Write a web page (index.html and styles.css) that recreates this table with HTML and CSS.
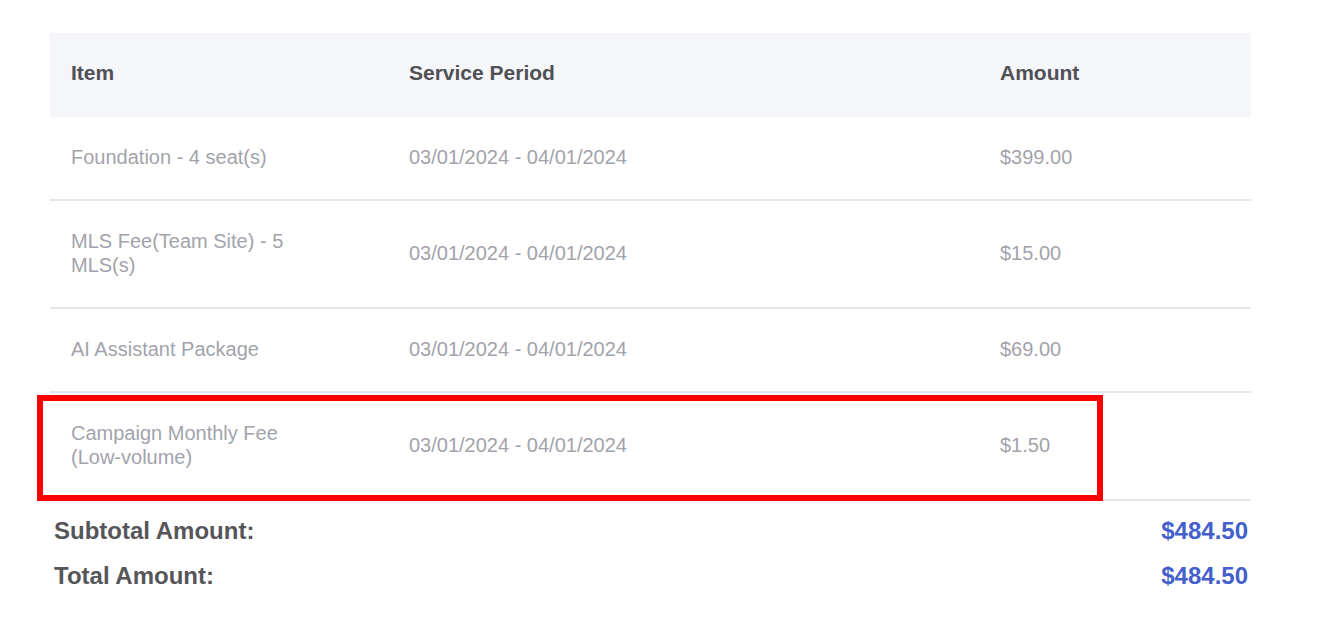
FILE: index.html
```html
<!DOCTYPE html>
<html lang="en">
<head>
<meta charset="utf-8">
<title>Invoice</title>
<link rel="stylesheet" href="styles.css">
</head>
<body>
<div class="page">
  <div class="invoice">
    <div class="table">
      <div class="row head">
        <div class="cell c-item">Item</div>
        <div class="cell c-period">Service Period</div>
        <div class="cell c-amount">Amount</div>
      </div>
      <div class="row">
        <div class="cell c-item">Foundation - 4 seat(s)</div>
        <div class="cell c-period">03/01/2024 - 04/01/2024</div>
        <div class="cell c-amount">$399.00</div>
      </div>
      <div class="row">
        <div class="cell c-item">MLS Fee(Team Site) - 5 MLS(s)</div>
        <div class="cell c-period">03/01/2024 - 04/01/2024</div>
        <div class="cell c-amount">$15.00</div>
      </div>
      <div class="row">
        <div class="cell c-item">AI Assistant Package</div>
        <div class="cell c-period">03/01/2024 - 04/01/2024</div>
        <div class="cell c-amount">$69.00</div>
      </div>
      <div class="row highlighted">
        <div class="cell c-item">Campaign Monthly Fee (Low-volume)</div>
        <div class="cell c-period">03/01/2024 - 04/01/2024</div>
        <div class="cell c-amount">$1.50</div>
        <div class="mark"></div>
      </div>
    </div>
    <div class="totals">
      <div class="total-line">
        <span class="t-label">Subtotal Amount:</span>
        <span class="t-value">$484.50</span>
      </div>
      <div class="total-line">
        <span class="t-label">Total Amount:</span>
        <span class="t-value">$484.50</span>
      </div>
    </div>
  </div>
</div>
</body>
</html>
```
FILE: styles.css
```css
* { box-sizing: border-box; }
html, body {
  margin: 0;
  padding: 0;
  background: #ffffff;
}
body {
  font-family: "Liberation Sans", Arial, sans-serif;
}
.page {
  padding: 33px 79px 0 50px;
}
.invoice {
  width: 1201px;
}
.table {
  display: flex;
  flex-direction: column;
}
.row {
  display: grid;
  grid-template-columns: 359px 591px 251px;
  align-items: center;
  border-bottom: 2px solid #e6e6ea;
  position: relative;
  font-size: 20px;
  line-height: 24px;
  color: #a2a3ab;
}
.row .cell {
  padding: 28px 0 30px;
}
.c-item {
  padding-left: 21px !important;
  padding-right: 100px !important;
}
.row.head {
  background: #f5f6fa;
  border-bottom: none;
  height: 84px;
  font-size: 21px;
  font-weight: bold;
  color: #505055;
}
.row.head .cell {
  padding-top: 0;
  padding-bottom: 4px;
}
.mark {
  position: absolute;
  left: -13px;
  top: 2px;
  width: 1066px;
  height: 106px;
  border: 6px solid #ff0000;
  pointer-events: none;
}
.totals {
  padding: 7px 3px 0 4px;
  display: flex;
  flex-direction: column;
}
.total-line {
  display: flex;
  justify-content: space-between;
  align-items: center;
  height: 45px;
  font-size: 24px;
  font-weight: bold;
}
.t-label { color: #56565a; }
.t-value { color: #4460cc; }
```
